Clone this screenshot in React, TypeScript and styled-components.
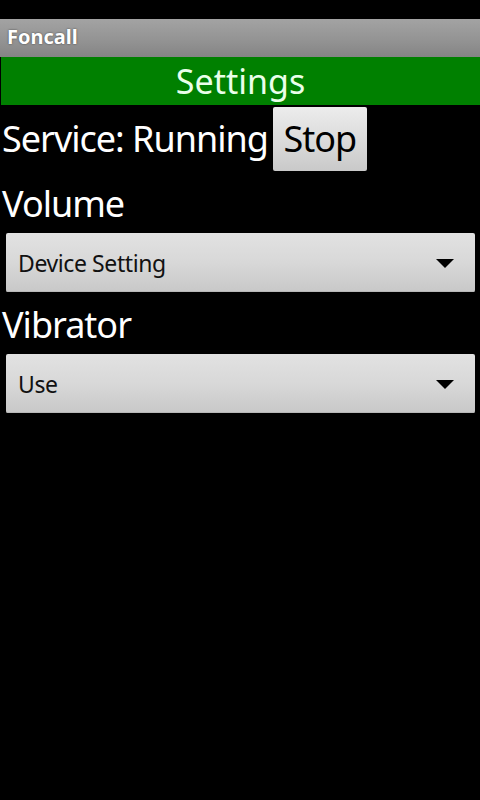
import React from "react";
import styled, { createGlobalStyle } from "styled-components";

const GlobalStyle = createGlobalStyle`
  html, body {
    margin: 0;
    padding: 0;
    background: #000;
  }
  body {
    font-family: "Noto Sans", "Open Sans", "DejaVu Sans", sans-serif;
  }
`;

const Screen = styled.div`
  width: 480px;
  height: 800px;
  background: #000;
  padding-top: 19px;
  box-sizing: border-box;
  overflow: hidden;
  display: flex;
  flex-direction: column;
`;

const TitleBar = styled.div`
  height: 38px;
  background: linear-gradient(#a3a3a3, #929292 60%, #848484);
  color: #fff;
  font-weight: 700;
  font-size: 20px;
  line-height: 36px;
  padding-left: 7px;
  text-shadow: 0 0 2px rgba(0, 0, 0, 0.6);
`;

const Header = styled.div`
  height: 48px;
  margin-left: 1px;
  background: #008000;
  color: #eaffea;
  font-size: 34px;
  line-height: 48px;
  text-align: center;
`;

const ServiceRow = styled.div`
  display: flex;
  align-items: center;
  height: 64px;
  margin-top: 2px;
  padding-left: 2px;
`;

const BigText = styled.span`
  color: #fff;
  font-size: 36px;
  line-height: 44px;
  letter-spacing: -1px;
  white-space: nowrap;
`;

const StopButton = styled.button`
  height: 64px;
  width: 94px;
  margin-left: 5px;
  padding: 0;
  border: none;
  border-radius: 2px;
  background: linear-gradient(#ececec, #dadada 55%, #c9c9c9);
  color: #000;
  font-family: inherit;
  font-size: 36px;
  line-height: 44px;
  letter-spacing: -1px;
`;

const Label = styled.div`
  color: #fff;
  font-size: 36px;
  line-height: 44px;
  letter-spacing: -1px;
  margin-top: 11px;
  padding-left: 2px;
`;

const Spinner = styled.div`
  display: flex;
  align-items: center;
  justify-content: space-between;
  height: 59px;
  margin: 7px 5px 0 6px;
  padding: 0 21px 0 12px;
  border-radius: 2px;
  background: linear-gradient(#e2e2e2, #d8d8d8 50%, #c8c8c8);
  box-shadow: inset 0 -1px 0 #b8b8b8;
  color: #111;
  font-size: 23px;
  letter-spacing: -0.4px;
`;

const Arrow = styled.div`
  width: 0;
  height: 0;
  border-left: 9px solid transparent;
  border-right: 9px solid transparent;
  border-top: 9px solid #000;
  margin-top: 2px;
`;

const SelectBox = ({ value }: { value: string }) => (
  <Spinner>
    <span>{value}</span>
    <Arrow />
  </Spinner>
);

export default function App() {
  return (
    <>
      <GlobalStyle />
      <Screen>
        <TitleBar>Foncall</TitleBar>
        <Header>Settings</Header>
        <ServiceRow>
          <BigText>Service: Running</BigText>
          <StopButton>Stop</StopButton>
        </ServiceRow>
        <Label>Volume</Label>
        <SelectBox value="Device Setting" />
        <Label>Vibrator</Label>
        <SelectBox value="Use" />
      </Screen>
    </>
  );
}
